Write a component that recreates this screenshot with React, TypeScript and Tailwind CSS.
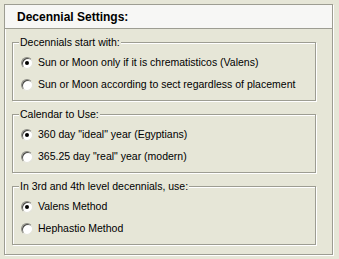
const font = { fontFamily: '"Liberation Sans", Arial, sans-serif' }

type Group = {
  title: string
  options: string[]
}

const groups: Group[] = [
  {
    title: 'Decennials start with:',
    options: [
      'Sun or Moon only if it is chrematisticos (Valens)',
      'Sun or Moon according to sect regardless of placement'
    ]
  },
  {
    title: 'Calendar to Use:',
    options: ['360 day "ideal" year (Egyptians)', '365.25 day "real" year (modern)']
  },
  {
    title: 'In 3rd and 4th level decennials, use:',
    options: ['Valens Method', 'Hephastio Method']
  }
]

const Radio = ({ checked }: { checked: boolean }): React.JSX.Element => (
  <span className="relative w-[12px] h-[12px] shrink-0 rounded-full bg-white border border-[#8c8c84] border-r-[#e4e4da] border-b-[#e4e4da] shadow-[inset_1px_1px_0_#4a4a46]">
    {checked && (
      <span className="absolute left-[3px] top-[3px] w-[4px] h-[4px] rounded-full bg-black" />
    )}
  </span>
)

const GroupBox = ({ group }: { group: Group }): React.JSX.Element => (
  <fieldset className="h-[65px] border border-[#9d9d92] pl-[8px] pt-[3px] shadow-[1px_1px_0_#ffffff,inset_1px_1px_0_#ffffff]">
    <legend className="-ml-[2px] px-[1px] leading-[13px] bg-[#e6e6d7]">{group.title}</legend>
    {group.options.map((opt, i) => (
      <div key={opt} className="h-[22px] flex items-center gap-[5px]">
        <Radio checked={i === 0} />
        <span className="whitespace-nowrap">{opt}</span>
      </div>
    ))}
  </fieldset>
)

export default function App(): React.JSX.Element {
  return (
    <div
      className="w-[339px] h-[259px] bg-[#e6e6d7] p-[4px] text-[10.5px] text-black"
      style={font}
    >
      <div className="w-[329px] h-[251px] border border-[#9d9d92] shadow-[1px_1px_0_#ffffff,inset_1px_1px_0_#ffffff] flex flex-col">
        <div className="h-[24px] bg-[#f7f7f5] border-b border-[#9d9d92] flex items-center pl-[12px] font-bold text-[12px]">
          Decennial Settings:
        </div>
        <div className="flex flex-col gap-[7px] pl-[7px] pr-[16px] pt-[7px]">
          {groups.map((g) => (
            <GroupBox key={g.title} group={g} />
          ))}
        </div>
      </div>
    </div>
  )
}
